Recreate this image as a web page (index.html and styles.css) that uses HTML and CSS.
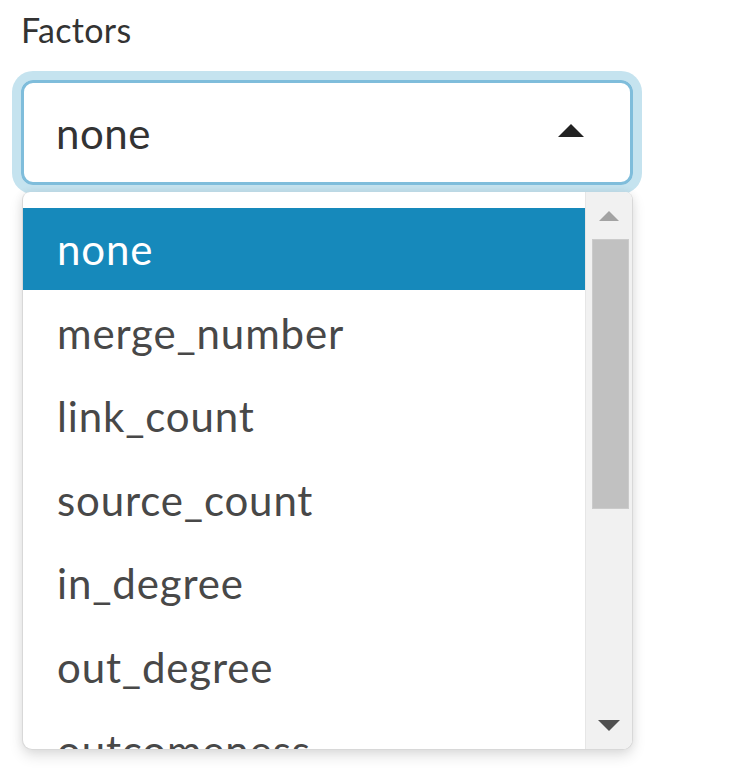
FILE: index.html
```html
<!DOCTYPE html>
<html>
<head>
<meta charset="utf-8">
<link rel="stylesheet" href="styles.css">
</head>
<body>
<div class="field">
  <div class="label">Factors</div>
  <div class="control">
    <span class="value">none</span>
    <span class="caret"></span>
  </div>
  <div class="dropdown">
    <div class="list">
      <div class="option active">none</div>
      <div class="option">merge_number</div>
      <div class="option">link_count</div>
      <div class="option">source_count</div>
      <div class="option">in_degree</div>
      <div class="option">out_degree</div>
      <div class="option">outcomeness</div>
    </div>
    <div class="scrollbar">
      <span class="arrow-up"></span>
      <div class="thumb"></div>
      <div class="track-rest"></div>
      <span class="arrow-down"></span>
    </div>
  </div>
</div>
</body>
</html>
```
FILE: styles.css
```css
html, body {
  margin: 0;
  padding: 0;
  background: #fff;
}
body {
  font-family: Lato, "Open Sans", sans-serif;
  color: #333;
  width: 752px;
  height: 768px;
  overflow: hidden;
}
.field {
  padding: 7px 0 0 21px;
  width: 612px;
}
.label {
  font-size: 34px;
  line-height: 46px;
  color: #333;
  padding-left: 0;
  margin-bottom: 27px;
  letter-spacing: 0.3px;
}
.control {
  box-sizing: border-box;
  height: 105px;
  border: 3px solid #7fbddb;
  border-radius: 12px;
  box-shadow: 0 0 0 9px #c5e3ef;
  display: flex;
  align-items: center;
  justify-content: space-between;
  padding: 0 46px 0 32px;
}
.value {
  font-size: 42px;
  color: #333;
  letter-spacing: 0.5px;
}
.caret {
  width: 0;
  height: 0;
  border-left: 13px solid transparent;
  border-right: 13px solid transparent;
  border-bottom: 13px solid #222;
  margin-top: -4px;
}
.dropdown {
  margin-top: 7px;
  margin-left: 1px;
  box-sizing: border-box;
  height: 558px;
  border: 1px solid #d8d8d8;
  border-top: none;
  border-radius: 8px 8px 10px 10px;
  box-shadow: 0 6px 14px rgba(0,0,0,0.12), 0 0 10px rgba(0,0,0,0.06);
  display: flex;
  overflow: hidden;
  background: #fff;
}
.list {
  flex: 1;
  padding-top: 16px;
  overflow: hidden;
}
.option {
  height: 83.5px;
  line-height: 83.5px;
  padding-left: 34px;
  font-size: 42px;
  color: #484848;
  white-space: nowrap;
  letter-spacing: 0.85px;
}
.option.active {
  background: #1689bb;
  color: #fff;
  height: 82px;
  line-height: 82px;
  margin-bottom: 1.5px;
}
.scrollbar {
  width: 46px;
  background: #f1f1f1;
  border-left: 1px solid #e6e6e6;
  display: flex;
  flex-direction: column;
  align-items: center;
  padding-bottom: 2px;
}
.arrow-up {
  width: 0;
  height: 0;
  border-left: 10px solid transparent;
  border-right: 10px solid transparent;
  border-bottom: 10px solid #a3a3a3;
  margin-top: 19px;
  margin-bottom: 18px;
}
.thumb {
  width: 37px;
  height: 270px;
  background: #c1c1c1;
  box-sizing: border-box;
  border: 1px solid #cbcbcb;
  margin-left: 2px;
}
.track-rest {
  flex: 1;
}
.arrow-down {
  width: 0;
  height: 0;
  border-left: 11px solid transparent;
  border-right: 11px solid transparent;
  border-top: 11px solid #505050;
  margin-bottom: 16px;
}
```
